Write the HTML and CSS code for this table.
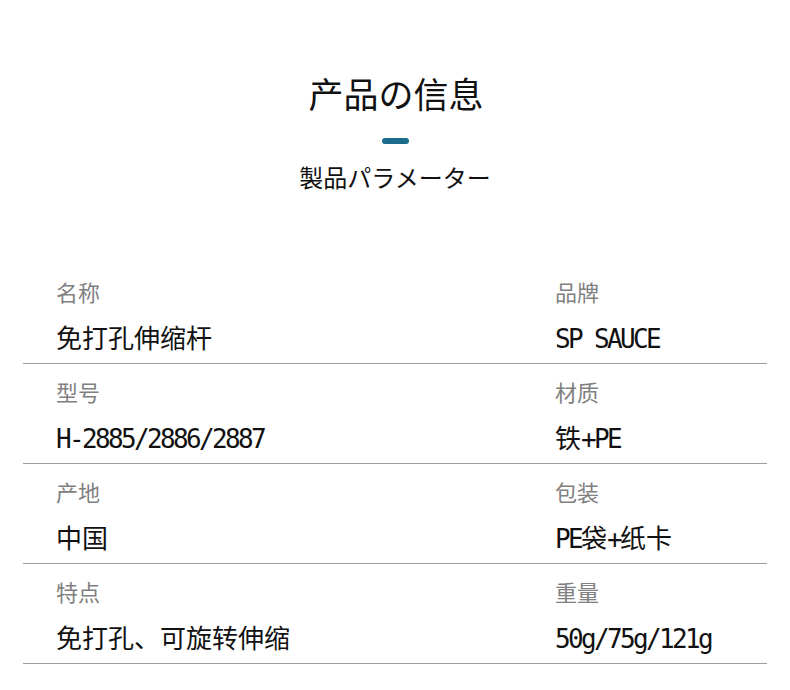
FILE: index.html
```html
<!DOCTYPE html>
<html lang="zh">
<head>
<meta charset="utf-8">
<link rel="stylesheet" href="styles.css">
</head>
<body>
<div class="page">
  <header class="head">
    <h1 class="title">产品の信息</h1>
    <div class="bar"></div>
    <p class="subtitle">製品パラメーター</p>
  </header>
  <div class="table">
    <div class="row">
      <div class="cell"><div class="label">名称</div><div class="value">免打孔伸缩杆</div></div>
      <div class="cell"><div class="label">品牌</div><div class="value"><span class="en">SP SAUCE</span></div></div>
    </div>
    <div class="row">
      <div class="cell"><div class="label">型号</div><div class="value"><span class="en">H-2885/2886/2887</span></div></div>
      <div class="cell"><div class="label">材质</div><div class="value">铁<span class="en">+PE</span></div></div>
    </div>
    <div class="row">
      <div class="cell"><div class="label">产地</div><div class="value">中国</div></div>
      <div class="cell"><div class="label">包装</div><div class="value"><span class="en">PE</span>袋<span class="en">+</span>纸卡</div></div>
    </div>
    <div class="row">
      <div class="cell"><div class="label">特点</div><div class="value">免打孔、可旋转伸缩</div></div>
      <div class="cell"><div class="label">重量</div><div class="value"><span class="en">50g/75g/121g</span></div></div>
    </div>
  </div>
</div>
</body>
</html>
```
FILE: styles.css
```css
html, body {
  margin: 0;
  padding: 0;
  background: #ffffff;
}
body {
  font-family: "Noto Sans CJK SC", "Noto Sans CJK JP", sans-serif;
  color: #111111;
}
.page {
  width: 790px;
}
.head {
  display: flex;
  flex-direction: column;
  align-items: center;
  padding-top: 75px;
}
.title {
  margin: 0;
  font-size: 35px;
  line-height: 35px;
  font-weight: 400;
  color: #111111;
  padding-left: 2px;
}
.bar {
  width: 27px;
  height: 6px;
  border-radius: 3px;
  background: #1b6c8b;
  margin-top: 28px;
}
.subtitle {
  margin: 21px 0 0 0;
  font-size: 24px;
  line-height: 24px;
  font-weight: 400;
  color: #111111;
}
.table {
  margin: 75px 23px 0 23px;
  width: 744px;
}
.row {
  display: grid;
  grid-template-columns: 499px 1fr;
  padding: 16px 0 13px 33px;
  border-bottom: 1px solid #9c9c9c;
}
.label {
  font-size: 22px;
  line-height: 22px;
  color: #808080;
}
.value {
  margin-top: 22px;
  height: 26px;
  font-size: 26px;
  line-height: 26px;
  color: #111111;
  white-space: nowrap;
}
.en {
  font-family: "DejaVu Sans Mono", monospace;
  font-size: 26px;
  letter-spacing: -2.65px;
  line-height: 26px;
}
</style>
```
